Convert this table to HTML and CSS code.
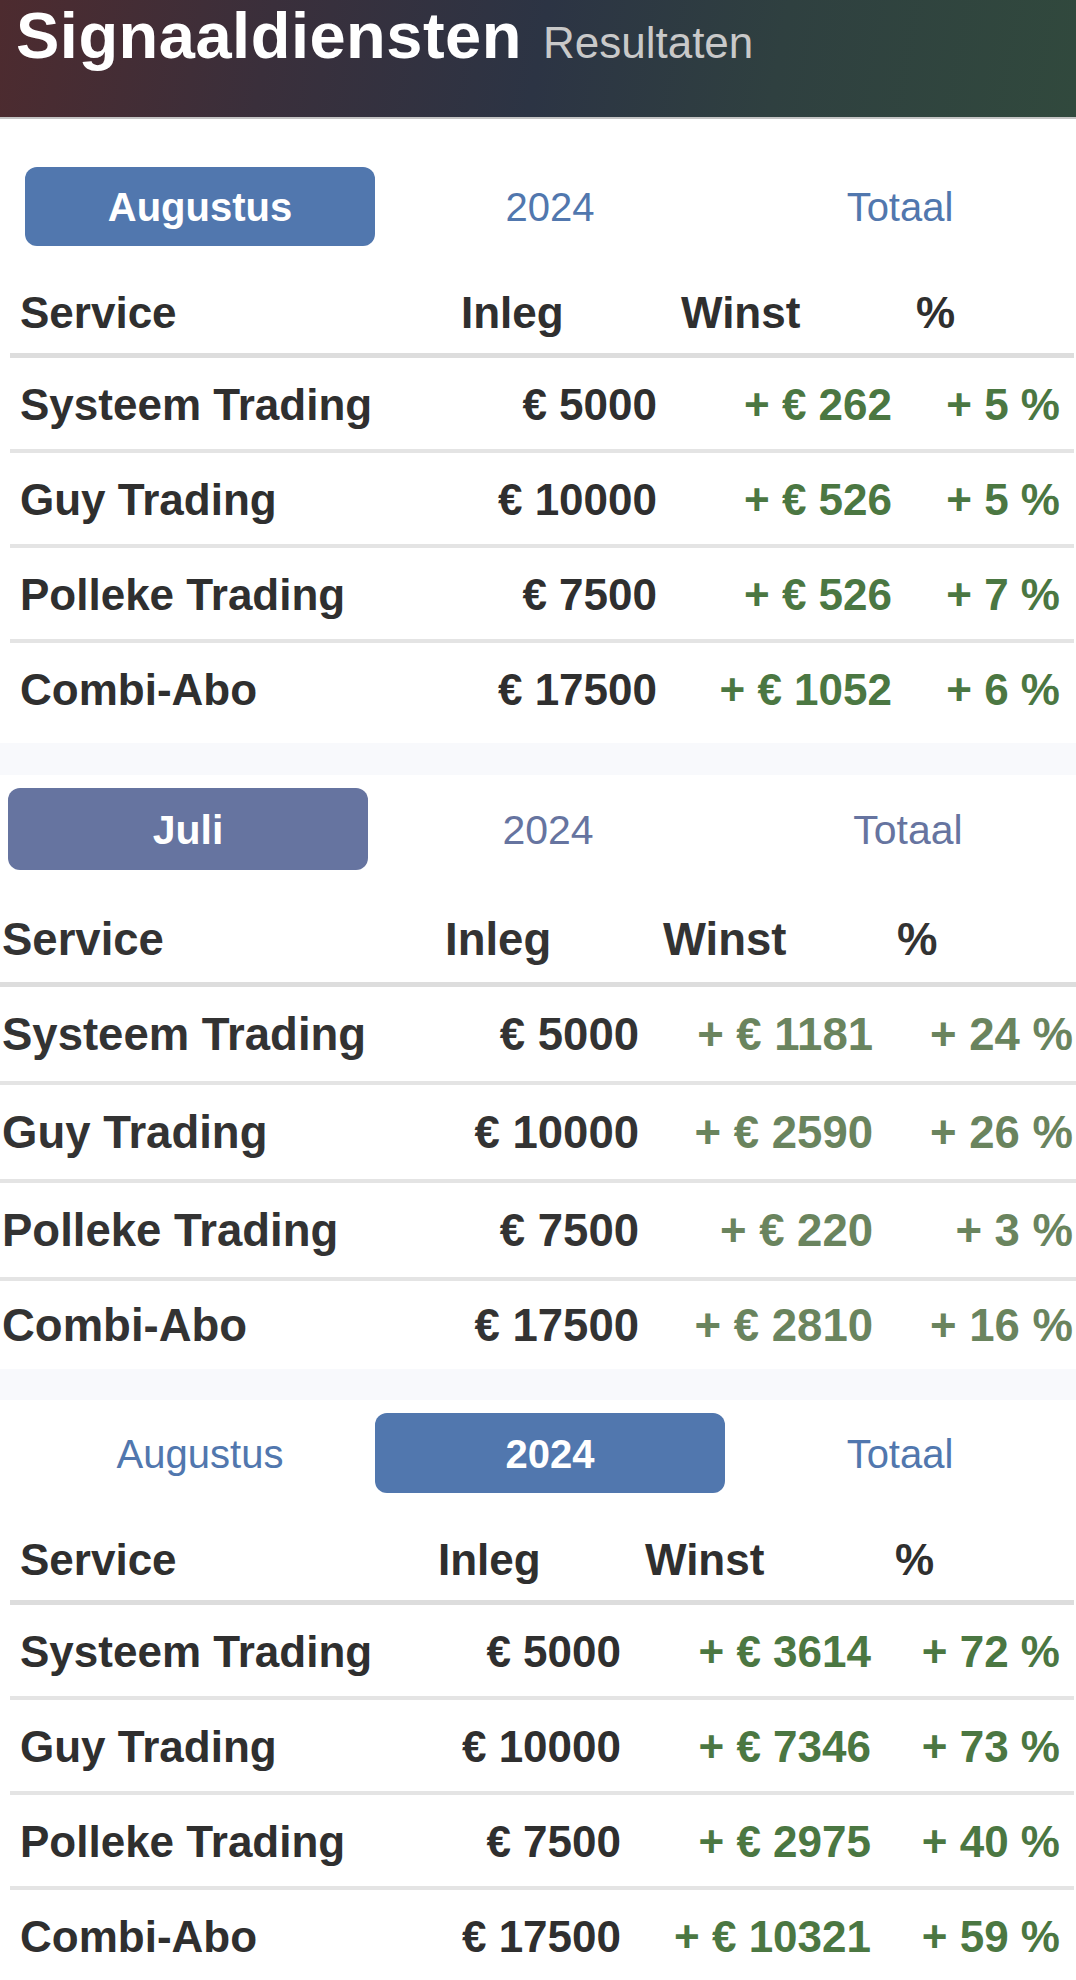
FILE: index.html
```html
<!DOCTYPE html>
<html lang="nl">
<head>
<meta charset="utf-8">
<title>Signaaldiensten Resultaten</title>
<link rel="stylesheet" href="styles.css">
</head>
<body>
<header class="topbar">
  <h1 class="title">Signaaldiensten</h1>
  <span class="subtitle">Resultaten</span>
</header>

<section class="block block-a">
  <nav class="tabs">
    <span class="tab active">Augustus</span>
    <span class="tab">2024</span>
    <span class="tab">Totaal</span>
  </nav>
  <div class="table">
    <div class="row head"><span>Service</span><span>Inleg</span><span>Winst</span><span>%</span></div>
    <div class="row"><span class="name">Systeem Trading</span><span class="num">€ 5000</span><span class="pos">+ € 262</span><span class="pos">+ 5 %</span></div>
    <div class="row"><span class="name">Guy Trading</span><span class="num">€ 10000</span><span class="pos">+ € 526</span><span class="pos">+ 5 %</span></div>
    <div class="row"><span class="name">Polleke Trading</span><span class="num">€ 7500</span><span class="pos">+ € 526</span><span class="pos">+ 7 %</span></div>
    <div class="row last"><span class="name">Combi-Abo</span><span class="num">€ 17500</span><span class="pos">+ € 1052</span><span class="pos">+ 6 %</span></div>
  </div>
</section>
<div class="band band-a"></div>

<section class="block block-b">
  <nav class="tabs">
    <span class="tab active">Juli</span>
    <span class="tab">2024</span>
    <span class="tab">Totaal</span>
  </nav>
  <div class="table">
    <div class="row head"><span>Service</span><span>Inleg</span><span>Winst</span><span>%</span></div>
    <div class="row"><span class="name">Systeem Trading</span><span class="num">€ 5000</span><span class="pos">+ € 1181</span><span class="pos">+ 24 %</span></div>
    <div class="row"><span class="name">Guy Trading</span><span class="num">€ 10000</span><span class="pos">+ € 2590</span><span class="pos">+ 26 %</span></div>
    <div class="row"><span class="name">Polleke Trading</span><span class="num">€ 7500</span><span class="pos">+ € 220</span><span class="pos">+ 3 %</span></div>
    <div class="row last"><span class="name">Combi-Abo</span><span class="num">€ 17500</span><span class="pos">+ € 2810</span><span class="pos">+ 16 %</span></div>
  </div>
</section>
<div class="band band-b"></div>

<section class="block block-c">
  <nav class="tabs">
    <span class="tab">Augustus</span>
    <span class="tab active">2024</span>
    <span class="tab">Totaal</span>
  </nav>
  <div class="table">
    <div class="row head"><span>Service</span><span>Inleg</span><span>Winst</span><span>%</span></div>
    <div class="row"><span class="name">Systeem Trading</span><span class="num">€ 5000</span><span class="pos">+ € 3614</span><span class="pos">+ 72 %</span></div>
    <div class="row"><span class="name">Guy Trading</span><span class="num">€ 10000</span><span class="pos">+ € 7346</span><span class="pos">+ 73 %</span></div>
    <div class="row"><span class="name">Polleke Trading</span><span class="num">€ 7500</span><span class="pos">+ € 2975</span><span class="pos">+ 40 %</span></div>
    <div class="row last"><span class="name">Combi-Abo</span><span class="num">€ 17500</span><span class="pos">+ € 10321</span><span class="pos">+ 59 %</span></div>
  </div>
</section>
</body>
</html>
```

FILE: styles.css
```css
* { box-sizing: content-box; }

html, body {
  margin: 0;
  padding: 0;
  background: #ffffff;
  overflow-x: hidden;
}

body {
  font-family: "Liberation Sans", Arial, Helvetica, sans-serif;
  color: #2f2f2f;
  width: 1076px;
}

/* ---------- header ---------- */
.topbar {
  height: 117px;
  border-bottom: 2px solid #c4c4c4;
  background: linear-gradient(100deg, #4d2b2f 0%, #3a2f3b 25%, #2c3444 50%, #2f4040 72%, #31493d 100%);
  display: flex;
  align-items: baseline;
  padding-left: 16px;
  gap: 21px;
}

.title {
  margin: 0;
  font-size: 65px;
  line-height: 65px;
  font-weight: bold;
  color: #ffffff;
  padding-top: 3px;
  letter-spacing: 0.5px;
}

.subtitle {
  font-size: 44px;
  color: #c9c9c9;
}

/* ---------- tabs ---------- */
.tabs {
  display: grid;
  grid-template-columns: 350px 350px 350px;
  padding-left: 25px;
}

.tab {
  height: 79px;
  display: flex;
  align-items: center;
  justify-content: center;
  font-size: 40px;
  color: #5177ae;
  border-radius: 12px;
  padding-top: 2px;
  box-sizing: border-box;
}

.tab.active {
  background: #5177ae;
  color: #ffffff;
  font-weight: bold;
}

/* ---------- table ---------- */
.table {
  margin-left: 10px;
  width: 1064px;
}

.row {
  display: grid;
  align-items: center;
  height: 91px;
  border-bottom: 4px solid #e4e4e4;
  font-size: 44px;
  font-weight: bold;
  line-height: 1;
  white-space: nowrap;
}

.row > span {
  padding: 2px 14px 0 10px;
}

.row.head {
  margin-top: 24px;
  height: 83px;
  border-bottom: 5px solid #dddddd;
}

.row.last {
  border-bottom: none;
}

.num, .pos {
  text-align: right;
}

.pos {
  color: #4b7742;
}

/* ---------- block a ---------- */
.block-a .tabs {
  margin-top: 48px;
}

.block-a .row {
  grid-template-columns: 441px 220px 235px 168px;
}

.block-a {
  padding-bottom: 9px;
}

/* ---------- bands ---------- */
.band {
  background: #f8f9fc;
}

.band-a { height: 32px; }
.band-b { height: 31px; }

/* ---------- block b (Juli) ---------- */
.block-b {
  overflow: hidden;
}

.block-b .tabs {
  margin-top: 13px;
  padding-left: 8px;
  grid-template-columns: 360px 360px 360px;
}

.block-b .tab {
  height: 82px;
  font-size: 41px;
  color: #6674a0;
}

.block-b .tab.active {
  background: #6674a0;
  color: #ffffff;
}

.block-b .table {
  margin-left: -8px;
  width: 1095px;
}

.block-b .row {
  grid-template-columns: 443px 218px 234px 200px;
  height: 94px;
  font-size: 45.5px;
  color: #333333;
}

.block-b .row.head {
  margin-top: 25px;
  height: 87px;
}

.block-b .row.last {
  height: 88px;
}

.block-b .pos {
  color: #6a845e;
}

/* ---------- block c (2024) ---------- */
.block-c .tabs {
  margin-top: 13px;
}

.block-c .tab {
  height: 80px;
}

.block-c .row {
  grid-template-columns: 418px 207px 250px 189px;
}
```
